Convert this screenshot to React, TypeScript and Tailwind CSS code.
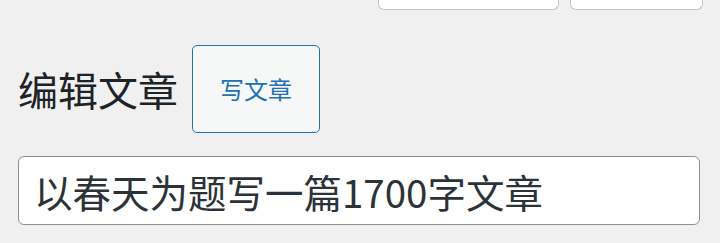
export default function App() {
  return (
    <div
      className="w-[720px] h-[243px] overflow-hidden bg-[#f0f0f1] text-[#1d2327]"
      style={{ fontFamily: '"Noto Sans CJK SC", "Noto Sans", sans-serif' }}
    >
      {/* screen options / help tabs, cut off at the top */}
      <div className="flex justify-end gap-[11px] pr-[17px]">
        <div className="-mt-[30px] h-[40px] w-[181px] rounded-b-[6px] border border-t-0 border-[#c3c4c7] bg-white" />
        <div className="-mt-[30px] h-[40px] w-[133px] rounded-b-[6px] border border-t-0 border-[#c3c4c7] bg-white" />
      </div>

      <div className="mt-[35px] flex items-center pl-[18px]">
        <h1 className="text-[40px] leading-none font-normal">编辑文章</h1>
        <button className="ml-[14px] h-[88px] w-[128px] rounded-[5px] border border-[#2271b1] bg-[#f6f7f7] text-[24px] text-[#2271b1]">
          写文章
        </button>
      </div>

      <div className="mt-[23px] px-[18px]">
        <input
          className="h-[69px] w-[682px] rounded-[6px] border border-[#8c8f94] bg-white pl-[15px] pr-[16px] text-[38.5px] text-[#2c3338] outline-none"
          defaultValue="以春天为题写一篇1700字文章"
          style={{ fontFamily: '"Noto Sans CJK SC", "Noto Sans", sans-serif' }}
        />
      </div>
    </div>
  );
}
